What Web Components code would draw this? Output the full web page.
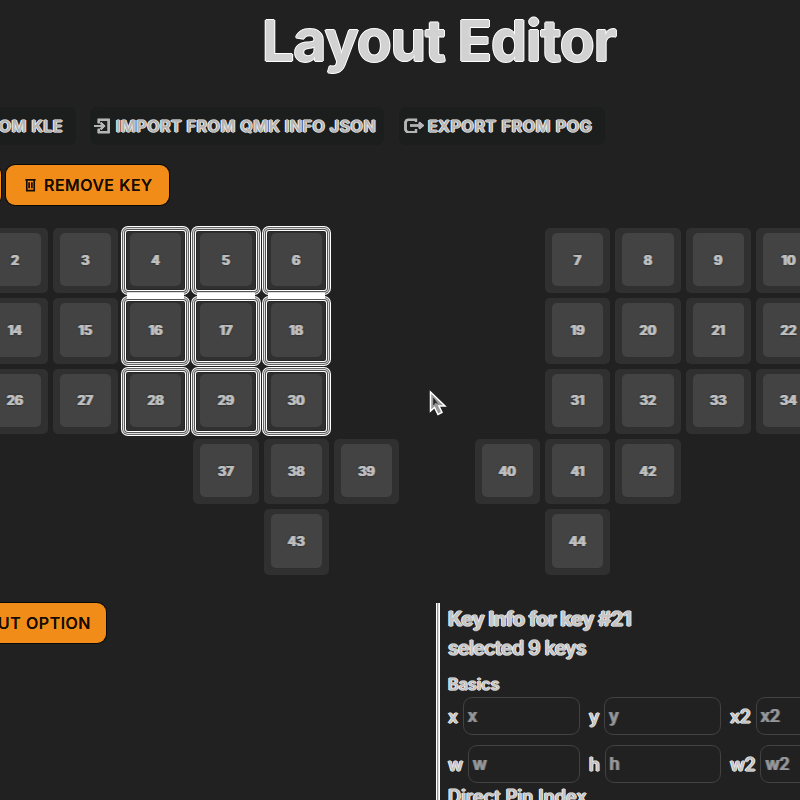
<!DOCTYPE html>
<html lang="en">
<head>
<meta charset="utf-8">
<title>Layout Editor</title>
<style>
html,body{margin:0;height:100%;background:#212121}
body{font-family:Inter,"Liberation Sans",sans-serif;color:#c4c4c4;overflow:hidden}
</style>
</head>
<body>
<layout-app></layout-app>
<script>
const halo = 'text-shadow:-1px 0 #f4f4f4,1px 0 #e4e4e4,0 -1px #999,0 1px #aaa;';

class ToolButton extends HTMLElement {
  connectedCallback() {
    this.attachShadow({mode:'open'}).innerHTML = `<style>
      :host{display:flex;flex:none;align-items:center;box-sizing:border-box;height:38px;border-radius:7px;background:#1b1e1d;font-weight:600;font-size:16px;letter-spacing:.54px;white-space:nowrap;color:#b4b4b4}
      .t{${halo}}
      :host([accent]){height:40px;background:#f28c18;color:#160c03;border-radius:9px;box-shadow:0 0 0 1px #0b0808;font-weight:500}
      :host([accent]) .t{text-shadow:0 0 .5px #160c03}
      </style><slot name="icon"></slot><span class="t"><slot></slot></span>`;
  }
}
customElements.define('tool-button', ToolButton);

class KeyCap extends HTMLElement {
  connectedCallback() {
    this.attachShadow({mode:'open'}).innerHTML = `<style>
      :host{display:block;position:relative;box-sizing:border-box;width:65.3px;height:65.3px;padding:5px 7px 7px;background:#303030;border-radius:5px;font-weight:600;font-size:13px}
      .c{height:100%;display:flex;align-items:center;justify-content:center;background:#434343;border-radius:5px;color:#c0c0c0;text-shadow:-1px 0 #e8e8e8a0,1px 0 #e8e8e8a0,0 0 2px #222,0 0 2px #222}
      :host([selected]){box-shadow:inset 0 0 0 1px #ddd,inset 0 0 0 2px #555,inset 0 0 0 3px #fff,inset 0 0 0 4px #252525,0 0 0 1px #666,0 0 0 2px #fff}
      :host([joined])::after{content:"";position:absolute;left:4px;right:4px;bottom:-6px;height:6px;background:#fff}
      </style><div class="c"><span><slot></slot></span></div>`;
  }
}
customElements.define('key-cap', KeyCap);

class KeyBoard extends HTMLElement {
  connectedCallback() {
    const keys = [];
    const run = (row, col, first, n, sel) => { for (let i=0;i<n;i++) keys.push([row, col+i, first+i, sel]); };
    run(2,1,14,2); run(2,3,16,3,'selected'); run(2,9,19,4);
    run(1,1,2,2); run(1,3,4,3,'selected joined'); run(1,9,7,4);
    run(3,1,26,2); run(3,3,28,3,'selected'); run(3,9,31,4);
    run(4,4,37,3); run(4,8,40,3);
    run(5,5,43,1); run(5,9,44,1);
    this.attachShadow({mode:'open'}).innerHTML = `<style>
      :host{display:grid;grid-template-columns:repeat(12,70.33px);grid-template-rows:repeat(5,70.33px);margin-left:-17.7px}
      </style>` + keys.map(([r,c,n,s]) => `<key-cap ${s||''} style="grid-row:${r};grid-column:${c}">${n}</key-cap>`).join('');
  }
}
customElements.define('key-board', KeyBoard);

class KeyField extends HTMLElement {
  connectedCallback() {
    const n = this.getAttribute('name');
    this.attachShadow({mode:'open'}).innerHTML = `<style>
      :host{display:flex;align-items:center;height:38px;font-size:18px;font-weight:500}
      label{padding-right:5px;letter-spacing:-.3px;${halo}}
      .i{flex:1;min-width:0;box-sizing:border-box;height:38px;line-height:36px;border:1px solid #424242;border-radius:9px;padding-left:4px;font-size:17px;letter-spacing:-.3px;color:#94979b;text-shadow:-1px 0 #ccc8,1px 0 #bbb8}
      </style><label>${n}</label><div class="i">${n}</div>`;
  }
}
customElements.define('key-field', KeyField);

class KeyInfo extends HTMLElement {
  connectedCallback() {
    this.attachShadow({mode:'open'}).innerHTML = `<style>
      :host{display:block;box-sizing:border-box;width:441px;height:220px;padding-left:12px;background:linear-gradient(90deg,#fff 1px,#999 1px 2px,#ddd 2px 3px,#fff 3px) 0 0/4px 100% no-repeat;${halo}}
      div{white-space:nowrap}
      .k{font-size:20px;font-weight:700;line-height:30px;padding-top:1px;letter-spacing:-.38px}
      .s{font-size:19.500px;font-weight:500;line-height:28px;letter-spacing:-.5px}
      .b{font-size:16px;font-weight:500;line-height:24px;margin-top:10px;letter-spacing:.25px}
      .g{display:grid;grid-template-columns:repeat(3,132px);column-gap:9px;row-gap:10px;text-shadow:none;margin-top:1px}
      .d{font-size:18px;font-weight:500;line-height:24px;margin-top:2px;letter-spacing:.25px}
      </style>
      <div class="k">Key Info for key #21</div><div class="s">selected 9 keys</div><div class="b">Basics</div>
      <div class="g">${['x','y','x2','w','h','w2'].map(n=>`<key-field name="${n}"></key-field>`).join('')}</div>
      <div class="d">Direct Pin Index</div>`;
  }
}
customElements.define('key-info', KeyInfo);

class LayoutApp extends HTMLElement {
  connectedCallback() {
    this.attachShadow({mode:'open'}).innerHTML = `<style>
      :host{display:block;width:800px;height:800px;overflow:hidden;position:relative;background:#212121}
      h1{margin:0;padding-top:5px;height:102px;box-sizing:border-box;text-align:center;padding-left:78px;font-size:57px;line-height:72px;letter-spacing:-1px;font-weight:700;color:#d2d2d2;text-shadow:-1px 0 #fff,1px 0 #fff,0 -1px #fff,0 1px #fff}
      .row{display:flex}
      .top{height:62px;padding-top:5px;box-sizing:border-box}
      .act{height:64px;gap:5px;margin-left:-40px;padding-top:1px;box-sizing:border-box}
      key-board{height:375px}
      .bot{justify-content:space-between;width:877px}
      svg{flex:none;fill:none;stroke:currentColor}
      .top svg{filter:drop-shadow(0 0 .5px #fff)}
      .cur{position:absolute;left:429px;top:390px;stroke:#fff;fill:#999}
      </style>
      <h1>Layout Editor</h1>
      <div class="row top">
        <tool-button style="width:116px;margin-left:-40px;padding-right:13px;justify-content:flex-end">FROM KLE</tool-button>
        <tool-button style="width:294px;margin-left:14px;padding-left:4px">
          <svg slot="icon" width="17" height="16" viewBox="0 0 18 16" stroke-width="2.2" style="margin-right:5px"><path d="M5 5V1.500h10.500v13H5V11M0 8h10M7 4.500 10.500 8 7 11.500"/></svg>IMPORT FROM QMK INFO JSON</tool-button>
        <tool-button style="width:206px;margin-left:15px;padding-left:5px;letter-spacing:.66px">
          <svg slot="icon" width="20" height="16" viewBox="0 0 20 16" stroke-width="2.2" style="margin-right:4px"><path d="M12 4V1.800H4Q1.500 2 1.500 5v6q0 3 3 3H12V11M6 7.500h12M15 4.500l3.500 3-3.500 3"/></svg>EXPORT FROM POG</tool-button>
      </div>
      <div class="row act">
        <tool-button accent style="width:41px"></tool-button>
        <tool-button accent style="width:163px;padding-left:18px">
          <svg slot="icon" width="13" height="16" viewBox="0 0 14 16" stroke-width="1.8" style="margin-right:7px"><path d="M1.500 2.500h11M3 2.500v11.500h8V2.500M5.500 5v6.500M8.500 5v6.500"/></svg>REMOVE KEY</tool-button>
      </div>
      <key-board></key-board>
      <div class="row bot">
        <tool-button accent style="width:240px;margin-left:-134px;justify-content:flex-end;padding-right:15px">ADD LAYOUT OPTION</tool-button>
        <key-info></key-info>
      </div>
      <svg class="cur" width="18" height="27" viewBox="0 0 18 27"><path d="M1.500 2v19l4-3.500 3.500 7 4-2-3-6.500h6z" stroke-width="1.500"/><path d="M4.500 8v7l2-2.500 2 1z" fill="#222" stroke="#222" stroke-width=".5"/></svg>`;
  }
}
customElements.define('layout-app', LayoutApp);
</script>
</body>
</html>
